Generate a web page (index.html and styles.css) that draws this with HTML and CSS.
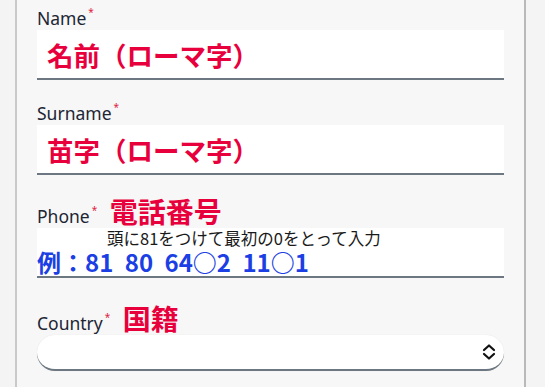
FILE: index.html
```html
<!doctype html>
<html lang="ja">
    <head>
        <meta charset="utf-8">
        <link rel="stylesheet" href="styles.css">
    </head>
    <body>
        <div class="layout-card">

            <form id="entry-form" class="entry-form">

                <div class="form-group">
                    <div class="label-row">
                        <label for="fname">Name<span class="req">*</span></label>
                    </div>
                    <input id="fname" name="fname" type="text" class="form-control" placeholder="名前（ローマ字）">
                </div>

                <div class="form-group group-surname">
                    <div class="label-row">
                        <label for="lname">Surname<span class="req">*</span></label>
                    </div>
                    <input id="lname" name="lname" type="text" class="form-control" placeholder="苗字（ローマ字）">
                </div>

                <div class="form-group group-phone">
                    <div class="label-row">
                        <label for="phone">Phone<span class="req">*</span></label>
                        <span class="label-note">電話番号</span>
                    </div>
                    <div id="phone" class="form-control form-control-phone">
                        <div class="phone-hint">頭に81をつけて最初の0をとって入力</div>
                        <div class="phone-example">例：81 80 64○2 11○1</div>
                    </div>
                </div>

                <div class="form-group group-country">
                    <div class="label-row">
                        <label for="country">Country<span class="req">*</span></label>
                        <span class="label-note">国籍</span>
                    </div>
                    <div id="country" class="form-select">
                        <svg class="select-arrows" width="16" height="18" viewBox="0 0 16 18">
                            <path d="M3 7 L8 2.5 L13 7" fill="none" stroke="#111" stroke-width="2.2" stroke-linecap="round" stroke-linejoin="round"/>
                            <path d="M3 11 L8 15.5 L13 11" fill="none" stroke="#111" stroke-width="2.2" stroke-linecap="round" stroke-linejoin="round"/>
                        </svg>
                    </div>
                </div>

            </form>

        </div>
    </body>
</html>
```

FILE: styles.css
```css
html,
body {
    margin: 0;
    height: 100%;
}

body {
    background: #f4f4f4;
    font-family: "Noto Sans", "Open Sans", sans-serif;
}

.layout-card {
    margin-left: 15px;
    width: 511px;
    min-height: 100%;
    background: #f7f7f7;
    border-left: 2px solid #c9c9c9;
    border-right: 2px solid #b9b9b9;
    padding: 6px 20px 0 20px;
    box-sizing: border-box;
}

.form-group {
    margin: 0;
}

.group-surname {
    margin-top: 21px;
}

.group-phone {
    margin-top: 24px;
}

.group-country {
    margin-top: 28px;
}

.label-row {
    line-height: 24px;
    font-size: 17.5px;
    color: #1c2534;
}

.label-row label {
    margin-right: 8px;
}

.req {
    color: #e0213f;
    font-size: 10px;
    line-height: 0;
    vertical-align: 9px;
    margin-left: 2px;
}

.label-note {
    font-family: "Noto Sans CJK JP", sans-serif;
    font-weight: 700;
    font-size: 28px;
    line-height: 24px;
    color: #e8003d;
}

.form-control {
    display: block;
    width: 100%;
    height: 50px;
    margin: 0;
    padding: 0 10px;
    box-sizing: border-box;
    border: none;
    border-bottom: 2px solid #6c7781;
    background: #fff;
    outline: none;
    font-family: "Noto Sans CJK JP", sans-serif;
    font-weight: 700;
    font-size: 26.5px;
    color: #e8003d;
}

.form-control::placeholder {
    color: #e8003d;
    opacity: 1;
}

.form-control-phone {
    padding: 0;
}

.phone-hint {
    padding-left: 70px;
    font-weight: 400;
    font-size: 16.5px;
    line-height: 20px;
    color: #1a1a1a;
}

.phone-example {
    font-size: 24px;
    line-height: 27px;
    color: #1b3fe4;
    word-spacing: 6px;
}

.form-select {
    display: flex;
    align-items: center;
    justify-content: flex-end;
    height: 36px;
    padding-right: 7px;
    box-sizing: border-box;
    background: #fff;
    border-radius: 18px;
    border-bottom: 2px solid #6c7781;
    box-shadow: 0 0 1px rgba(0, 0, 0, 0.12);
}
```
